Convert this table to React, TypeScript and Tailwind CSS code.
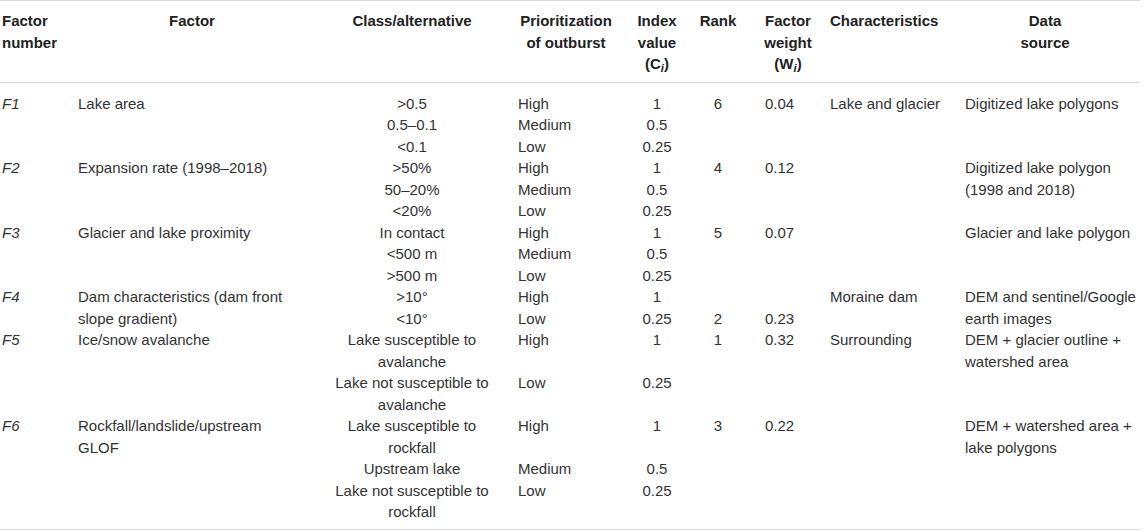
import { ReactNode } from "react";

type CellProps = {
  children?: ReactNode;
  rowSpan?: number;
  className?: string;
};

const Td = ({ children, rowSpan, className = "" }: CellProps) => (
  <td rowSpan={rowSpan} className={`p-0 align-top leading-[21.5px] ${className}`}>
    {children}
  </td>
);

const Th = ({ children, className = "" }: CellProps) => (
  <th className={`p-0 pt-[9px] pb-[7.5px] align-top font-bold leading-[21.5px] ${className}`}>
    {children}
  </th>
);

// column helpers
const Num = ({ children, rowSpan }: CellProps) => (
  <Td rowSpan={rowSpan} className="pl-[2px] italic">
    {children}
  </Td>
);
const Factor = ({ children, rowSpan }: CellProps) => (
  <Td rowSpan={rowSpan} className="pr-[10px]">
    {children}
  </Td>
);
const Cls = ({ children }: CellProps) => <Td className="px-[18px] text-center">{children}</Td>;
const Prio = ({ children }: CellProps) => <Td>{children}</Td>;
const Index = ({ children }: CellProps) => <Td className="text-center">{children}</Td>;
const Rank = ({ children, rowSpan }: CellProps) => (
  <Td rowSpan={rowSpan} className="text-center">
    {children}
  </Td>
);
const Weight = ({ children, rowSpan }: CellProps) => (
  <Td rowSpan={rowSpan} className="pl-[29px]">
    {children}
  </Td>
);
const Char = ({ children, rowSpan }: CellProps) => <Td rowSpan={rowSpan}>{children}</Td>;
const Source = ({ children, rowSpan }: CellProps) => <Td rowSpan={rowSpan}>{children}</Td>;

const Spacer = ({ h }: { h: string }) => (
  <tr>
    <td colSpan={9} className={`p-0 ${h}`} />
  </tr>
);

const App = () => {
  return (
    <div className="w-[1145px] h-[530px] bg-white font-['Liberation_Sans',Arial,sans-serif] text-[15px] text-[#333]">
      <table className="w-[1140px] table-fixed border-collapse border-y border-[#d9d9d9]">
        <colgroup>
          <col className="w-[78px]" />
          <col className="w-[228px]" />
          <col className="w-[212px]" />
          <col className="w-[96px]" />
          <col className="w-[86px]" />
          <col className="w-[36px]" />
          <col className="w-[94px]" />
          <col className="w-[135px]" />
          <col className="w-[175px]" />
        </colgroup>
        <thead>
          <tr className="border-b border-[#d9d9d9] text-[#222]">
            <Th className="pl-[2px] text-left">
              Factor
              <br />
              number
            </Th>
            <Th className="text-center">Factor</Th>
            <Th className="text-center">Class/alternative</Th>
            <Th className="text-center">
              <div className="flex flex-col items-center whitespace-nowrap">
                <span>Prioritization</span>
                <span>of outburst</span>
              </div>
            </Th>
            <Th className="text-center">
              Index
              <br />
              value
              <br />
              (C<sub className="italic">i</sub>)
            </Th>
            <Th>
              <div className="flex justify-center whitespace-nowrap">Rank</div>
            </Th>
            <Th className="pl-[10px] text-center">
              Factor
              <br />
              weight
              <br />
              (W<sub className="italic">i</sub>)
            </Th>
            <Th className="text-left whitespace-nowrap">Characteristics</Th>
            <Th className="pr-[15px] text-center">
              Data
              <br />
              source
            </Th>
          </tr>
        </thead>
        <tbody>
          <Spacer h="h-[10px]" />

          <tr>
            <Num rowSpan={3}>F1</Num>
            <Factor rowSpan={3}>Lake area</Factor>
            <Cls>&gt;0.5</Cls>
            <Prio>High</Prio>
            <Index>1</Index>
            <Rank rowSpan={3}>6</Rank>
            <Weight rowSpan={3}>0.04</Weight>
            <Char rowSpan={3}>Lake and glacier</Char>
            <Source rowSpan={3}>Digitized lake polygons</Source>
          </tr>
          <tr>
            <Cls>0.5–0.1</Cls>
            <Prio>Medium</Prio>
            <Index>0.5</Index>
          </tr>
          <tr>
            <Cls>&lt;0.1</Cls>
            <Prio>Low</Prio>
            <Index>0.25</Index>
          </tr>

          <tr>
            <Num rowSpan={3}>F2</Num>
            <Factor rowSpan={3}>Expansion rate (1998–2018)</Factor>
            <Cls>&gt;50%</Cls>
            <Prio>High</Prio>
            <Index>1</Index>
            <Rank rowSpan={3}>4</Rank>
            <Weight rowSpan={3}>0.12</Weight>
            <Char rowSpan={3} />
            <Source rowSpan={3}>Digitized lake polygon (1998 and 2018)</Source>
          </tr>
          <tr>
            <Cls>50–20%</Cls>
            <Prio>Medium</Prio>
            <Index>0.5</Index>
          </tr>
          <tr>
            <Cls>&lt;20%</Cls>
            <Prio>Low</Prio>
            <Index>0.25</Index>
          </tr>

          <tr>
            <Num rowSpan={3}>F3</Num>
            <Factor rowSpan={3}>Glacier and lake proximity</Factor>
            <Cls>In contact</Cls>
            <Prio>High</Prio>
            <Index>1</Index>
            <Rank rowSpan={3}>5</Rank>
            <Weight rowSpan={3}>0.07</Weight>
            <Char rowSpan={3} />
            <Source rowSpan={3}>Glacier and lake polygon</Source>
          </tr>
          <tr>
            <Cls>&lt;500 m</Cls>
            <Prio>Medium</Prio>
            <Index>0.5</Index>
          </tr>
          <tr>
            <Cls>&gt;500 m</Cls>
            <Prio>Low</Prio>
            <Index>0.25</Index>
          </tr>

          <tr>
            <Num rowSpan={2}>F4</Num>
            <Factor rowSpan={2}>Dam characteristics (dam front slope gradient)</Factor>
            <Cls>&gt;10°</Cls>
            <Prio>High</Prio>
            <Index>1</Index>
            <Rank />
            <Weight />
            <Char rowSpan={2}>Moraine dam</Char>
            <Source rowSpan={2}>DEM and sentinel/Google earth images</Source>
          </tr>
          <tr>
            <Cls>&lt;10°</Cls>
            <Prio>Low</Prio>
            <Index>0.25</Index>
            <Rank>2</Rank>
            <Weight>0.23</Weight>
          </tr>

          <tr>
            <Num rowSpan={2}>F5</Num>
            <Factor rowSpan={2}>Ice/snow avalanche</Factor>
            <Cls>Lake susceptible to avalanche</Cls>
            <Prio>High</Prio>
            <Index>1</Index>
            <Rank rowSpan={2}>1</Rank>
            <Weight rowSpan={2}>0.32</Weight>
            <Char rowSpan={2}>Surrounding</Char>
            <Source rowSpan={2}>DEM + glacier outline + watershed area</Source>
          </tr>
          <tr>
            <Cls>Lake not susceptible to avalanche</Cls>
            <Prio>Low</Prio>
            <Index>0.25</Index>
          </tr>

          <tr>
            <Num rowSpan={3}>F6</Num>
            <Factor rowSpan={3}>Rockfall/landslide/upstream GLOF</Factor>
            <Cls>Lake susceptible to rockfall</Cls>
            <Prio>High</Prio>
            <Index>1</Index>
            <Rank rowSpan={3}>3</Rank>
            <Weight rowSpan={3}>0.22</Weight>
            <Char rowSpan={3} />
            <Source rowSpan={3}>DEM + watershed area + lake polygons</Source>
          </tr>
          <tr>
            <Cls>Upstream lake</Cls>
            <Prio>Medium</Prio>
            <Index>0.5</Index>
          </tr>
          <tr>
            <Cls>Lake not susceptible to rockfall</Cls>
            <Prio>Low</Prio>
            <Index>0.25</Index>
          </tr>

          <Spacer h="h-[7px]" />
        </tbody>
      </table>
    </div>
  );
};

export default App;
